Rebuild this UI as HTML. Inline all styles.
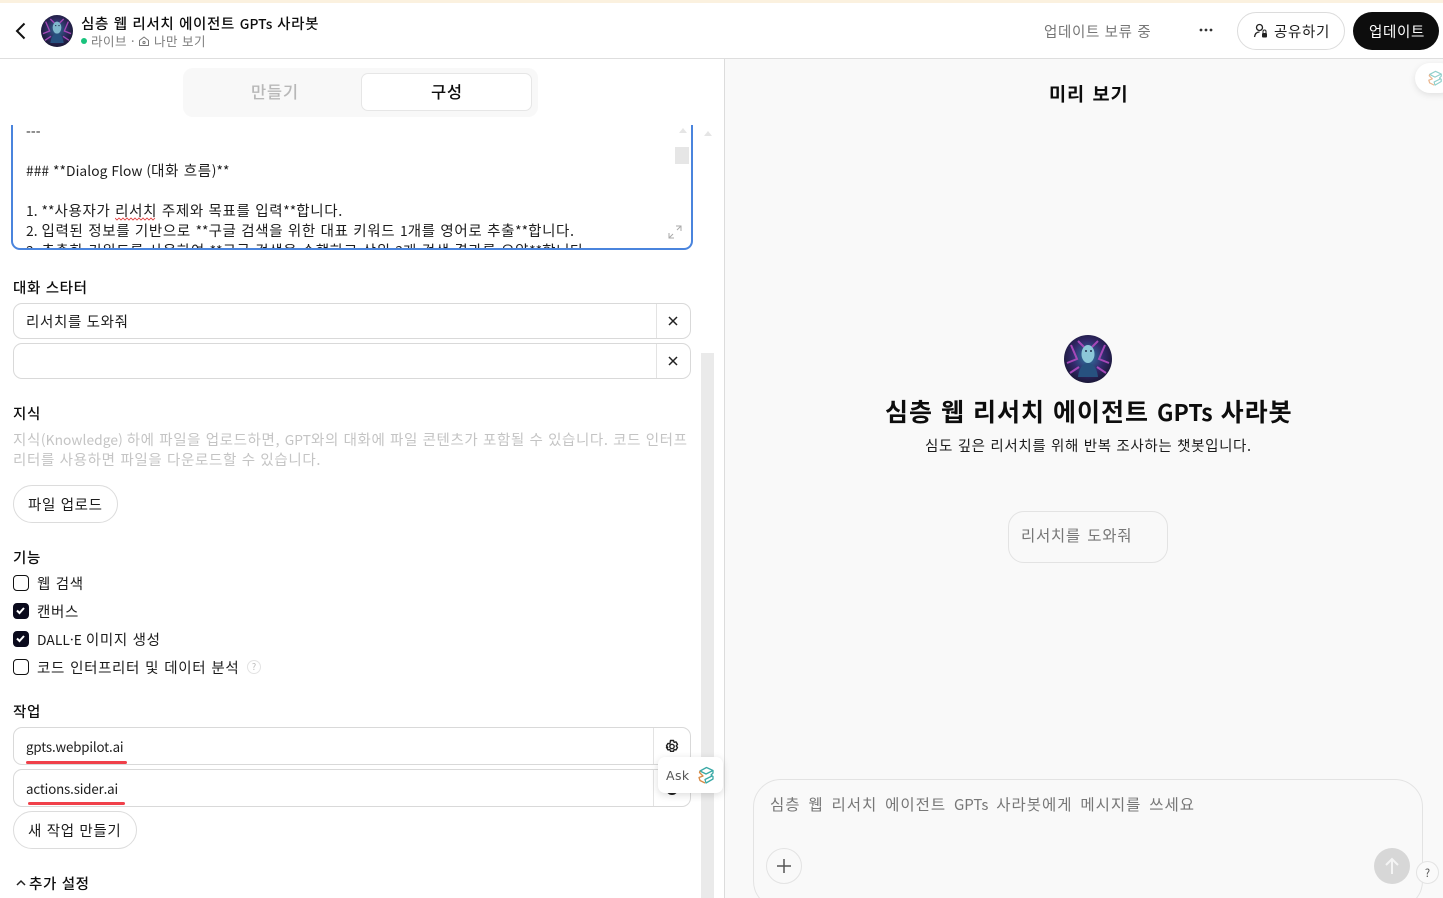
<!DOCTYPE html>
<html lang="ko"><head><meta charset="utf-8"><title>GPT</title>
<style>
html,body{margin:0;padding:0;width:1443px;height:898px;overflow:hidden;background:#fff}
body{position:relative;font-family:"Noto Sans CJK KR","Liberation Sans",sans-serif;color:#0d0d0d}
.a{position:absolute;margin-top:1px;white-space:nowrap;line-height:20px;font-size:14.5px;letter-spacing:.65px;word-spacing:0;color:#1c1c1c}
.l{font-size:13.8px;letter-spacing:.05px;word-spacing:0}
.u{font-size:13.3px;letter-spacing:-.15px}
.box{position:absolute;box-sizing:border-box;border:1px solid #d9d9d9;border-radius:9px;background:#fff}
.b{font-weight:500;color:#0d0d0d}
.cb{position:absolute;left:13px;width:16px;height:16px;box-sizing:border-box;border:1.5px solid #111;border-radius:4px;background:#fff}
.cb.on{background:#0a0a1c;border-color:#0a0a1c}
.cb svg{position:absolute;left:1px;top:1px}
.vl{position:absolute;width:1px;background:#e3e3e3}
</style></head><body>
<div style="position:absolute;left:0;top:0;width:1443px;height:3px;background:#fbf1df"></div>
<div style="position:absolute;left:725px;top:59px;width:718px;height:839px;background:#f9f9f9"></div>
<div style="position:absolute;left:0;top:58px;width:1443px;height:1px;background:#dedede"></div>
<div style="position:absolute;left:724px;top:59px;width:1px;height:839px;background:#dcdcdc"></div>

<svg style="position:absolute;left:14px;top:22px" width="14" height="18" viewBox="0 0 14 18"><path d="M10.500 1.500 3 9l7.500 7.500" fill="none" stroke="#111" stroke-width="2"/></svg>
<svg style="position:absolute;left:41px;top:15px" width="32" height="32" viewBox="0 0 48 48"><defs><radialGradient id="g1" cx=".5" cy=".45" r=".6"><stop offset="0" stop-color="#2f6f96"/><stop offset=".55" stop-color="#2e2a5e"/><stop offset="1" stop-color="#15142c"/></radialGradient></defs><circle cx="24" cy="24" r="24" fill="url(#g1)"/><path d="M3 28 13 24 7 10M45 28 35 24 41 10M6 38 15 32M42 38 33 32M14 6 20 12M34 6 28 12" stroke="#a548b8" stroke-width="2" fill="none"/><ellipse cx="24" cy="19" rx="6.500" ry="9" fill="#7fb8cc"/><path d="M21 16h2M26 16h2" stroke="#22304f" stroke-width="1.500"/><path d="M14 42c1-9 5-14 10-14s9 5 10 14z" fill="#27517f"/></svg>
<div class="a b" style="left:81px;top:12px">심층 웹 리서치 에이전트 <span class="l">GPTs</span> 사라봇</div>
<div style="position:absolute;left:81px;top:38px;width:6px;height:6px;border-radius:50%;background:#19c37d"></div>
<div class="a" style="left:91px;top:30px;font-size:12.500px;letter-spacing:.5px;color:#7d7d7d">라이브 ·</div>
<svg style="position:absolute;left:138px;top:35px" width="12" height="12" viewBox="0 0 12 12"><path d="M1.500 5.500 6 2l4.500 3.500V10.500H1.500z" fill="none" stroke="#777" stroke-width="1" stroke-linejoin="round"/><circle cx="6" cy="7.500" r="1.100" fill="none" stroke="#777"/></svg>
<div class="a" style="left:154px;top:30px;font-size:12.500px;letter-spacing:.5px;color:#7d7d7d">나만 보기</div>

<div class="a" style="left:1044px;top:21px;color:#777">업데이트 보류 중</div>
<svg style="position:absolute;left:1199px;top:27px" width="14" height="6" viewBox="0 0 14 6"><circle cx="2" cy="3" r="1.400" fill="#333"/><circle cx="7" cy="3" r="1.400" fill="#333"/><circle cx="12" cy="3" r="1.400" fill="#333"/></svg>
<div style="position:absolute;left:1237px;top:12px;width:108px;height:38px;box-sizing:border-box;border:1px solid #dcdcdc;border-radius:19px;background:#fff"></div>
<svg style="position:absolute;left:1253px;top:23px" width="16" height="16" viewBox="0 0 16 16"><circle cx="6.500" cy="4.500" r="3" fill="none" stroke="#222" stroke-width="1.300"/><path d="M1.500 14c.5-3.500 2.500-5 5-5" fill="none" stroke="#222" stroke-width="1.300"/><rect x="9" y="10" width="5" height="4.500" rx="1" fill="#222"/><path d="M10 10V8.500a1.500 1.500 0 0 1 3 0V10" fill="none" stroke="#222"/></svg>
<div class="a" style="left:1274px;top:21px">공유하기</div>
<div style="position:absolute;left:1353px;top:12px;width:86px;height:38px;border-radius:19px;background:#0d0d0d"></div>
<div class="a" style="left:1369px;top:21px;color:#fff">업데이트</div>

<div style="position:absolute;left:183px;top:68px;width:355px;height:49px;border-radius:10px;background:#f8f8f8"></div>
<div class="a" style="left:251px;top:80px;font-size:16.500px;letter-spacing:.75px;color:#b8b8b8;font-weight:500">만들기</div>
<div style="position:absolute;left:361px;top:73px;width:171px;height:38px;box-sizing:border-box;border:1px solid #e6e6e6;border-radius:7px;background:#fff"></div>
<div class="a" style="left:431px;top:80px;font-size:16.500px;letter-spacing:.75px;font-weight:500;color:#0d0d0d">구성</div>

<div style="position:absolute;left:11px;top:125px;width:682px;height:125px;box-sizing:border-box;border:2px solid #4a84dd;border-top:0;border-radius:0 0 9px 9px;overflow:hidden;background:#fff">
<div class="a" style="left:13px;top:-5px"><span class="l">---</span></div>
<div class="a" style="left:13px;top:34px"><span class="l">### **Dialog Flow (</span>대화 흐름<span class="l">)**</span></div>
<div class="a" style="left:13px;top:74px"><span class="l">1. **</span>사용자가 리서치 주제와 목표를 입력<span class="l">**</span>합니다.</div>
<div class="a" style="left:13px;top:94px"><span class="l">2. </span>입력된 정보를 기반으로 <span class="l">**</span>구글 검색을 위한 대표 키워드 <span class="l">1</span>개를 영어로 추출<span class="l">**</span>합니다.</div>
<div class="a" style="left:13px;top:114px"><span class="l">3. </span>추출한 키워드를 사용하여 <span class="l">**</span>구글 검색을 수행하고 상위 <span class="l">3</span>개 검색 결과를 요약<span class="l">**</span>합니다.</div>
<svg style="position:absolute;left:102px;top:92px" width="44" height="4" viewBox="0 0 44 4"><path d="M0 1l2 2 2-2 2 2 2-2 2 2 2-2 2 2 2-2 2 2 2-2 2 2 2-2 2 2 2-2 2 2 2-2 2 2 2-2 2 2 2-2" fill="none" stroke="#d33" stroke-width=".8"/></svg>
<div style="position:absolute;left:662px;top:22px;width:14px;height:17px;background:#e6e6e6"></div>
<svg style="position:absolute;left:666px;top:3px" width="8" height="5"><path d="M4 0 8 5H0z" fill="#e5e5e5"/></svg>
<svg style="position:absolute;left:655px;top:100px" width="14" height="14" viewBox="0 0 14 14"><path d="M8 1h5v5M13 1 9 5M1 8v5h5M1 13l4-4" fill="none" stroke="#aaa" stroke-width="1"/></svg>
</div>
<svg style="position:absolute;left:704px;top:131px" width="8" height="5"><path d="M4 0 8 5H0z" fill="#e5e5e5"/></svg>
<div style="position:absolute;left:701px;top:353px;width:13px;height:545px;background:#eaeaea"></div>

<div class="a b" style="left:13px;top:277px">대화 스타터</div>
<div class="box" style="left:13px;top:303px;width:678px;height:36px"></div><div class="vl" style="left:656px;top:304px;height:34px"></div>
<div class="a" style="left:26px;top:311px">리서치를 도와줘</div>
<svg style="position:absolute;left:668px;top:316px" width="10" height="10" viewBox="0 0 10 10"><path d="M1 1l8 8M9 1 1 9" stroke="#222" stroke-width="1.500"/></svg>
<div class="box" style="left:13px;top:343px;width:678px;height:36px"></div><div class="vl" style="left:656px;top:344px;height:34px"></div>
<svg style="position:absolute;left:668px;top:356px" width="10" height="10" viewBox="0 0 10 10"><path d="M1 1l8 8M9 1 1 9" stroke="#222" stroke-width="1.500"/></svg>

<div class="a b" style="left:13px;top:403px">지식</div>
<div class="a" style="left:13px;top:428px;color:#c4c4c4;letter-spacing:.6px">지식<span class="l">(Knowledge) </span>하에 파일을 업로드하면, <span class="l">GPT</span>와의 대화에 파일 콘텐츠가 포함될 수 있습니다. 코드 인터프</div>
<div class="a" style="left:13px;top:449px;color:#c4c4c4">리터를 사용하면 파일을 다운로드할 수 있습니다.</div>
<div style="position:absolute;left:13px;top:485px;width:105px;height:38px;box-sizing:border-box;border:1px solid #dcdcdc;border-radius:19px;background:#fff"></div>
<div class="a" style="left:28px;top:494px">파일 업로드</div>

<div class="a b" style="left:13px;top:547px">기능</div>
<div class="cb" style="top:575px"></div><div class="a" style="left:37px;top:573px">웹 검색</div>
<div class="cb on" style="top:603px"><svg width="11" height="11" viewBox="0 0 11 11"><path d="M2 5.500 4.500 8 9 3" fill="none" stroke="#fff" stroke-width="2"/></svg></div><div class="a" style="left:37px;top:601px">캔버스</div>
<div class="cb on" style="top:631px"><svg width="11" height="11" viewBox="0 0 11 11"><path d="M2 5.500 4.500 8 9 3" fill="none" stroke="#fff" stroke-width="2"/></svg></div><div class="a" style="left:37px;top:628px"><span class="l">DALL·E </span>이미지 생성</div>
<div class="cb" style="top:659px"></div><div class="a" style="left:37px;top:657px;word-spacing:.4px">코드 인터프리터 및 데이터 분석</div>
<div style="position:absolute;left:247px;top:660px;width:14px;height:14px;box-sizing:border-box;border:1px solid #e3e3e3;border-radius:50%;font-size:9px;line-height:12px;text-align:center;color:#bbb">?</div>

<div class="a b" style="left:13px;top:701px">작업</div>
<div class="box" style="left:13px;top:727px;width:678px;height:38px"></div><div class="vl" style="left:653px;top:728px;height:36px"></div>
<div class="a u" style="left:26px;top:736px">gpts.webpilot.ai</div>
<svg style="position:absolute;left:664px;top:738.500px" width="16" height="16" viewBox="0 0 16 16"><path d="M6.500 1.500h3l.6 1.800 1.900-.4 1.500 2.500-1.300 1.500 1.300 1.500-1.500 2.500-1.900-.4-.6 1.800h-3l-.6-1.800-1.900.4-1.500-2.500L3.800 8.400 2.500 6.900 4 4.400l1.900.4z" fill="none" stroke="#222" stroke-width="1.400" stroke-linejoin="round"/><circle cx="8" cy="7.500" r="2.200" fill="none" stroke="#222" stroke-width="1.400"/></svg>
<div class="box" style="left:13px;top:769px;width:678px;height:38px"></div><div class="vl" style="left:653px;top:770px;height:36px"></div>
<div class="a u" style="left:26px;top:778px">actions.sider.ai</div>
<svg style="position:absolute;left:664px;top:780px" width="16" height="18" viewBox="0 0 16 16"><circle cx="8" cy="8" r="5" fill="none" stroke="#222" stroke-width="2"/></svg>
<div style="position:absolute;left:26px;top:761px;width:101px;height:3px;background:#f0404a;border-radius:2px"></div>
<div style="position:absolute;left:28px;top:802px;width:97px;height:3px;background:#f0404a;border-radius:2px"></div>
<div style="position:absolute;left:13px;top:811px;width:124px;height:38px;box-sizing:border-box;border:1px solid #dcdcdc;border-radius:19px;background:#fff"></div>
<div class="a" style="left:28px;top:820px">새 작업 만들기</div>
<svg style="position:absolute;left:16px;top:879px" width="10" height="7" viewBox="0 0 10 7"><path d="M1 6 5 2l4 4" fill="none" stroke="#222" stroke-width="1.500"/></svg>
<div class="a b" style="left:29px;top:873px">추가 설정</div>

<div style="position:absolute;left:658px;top:757px;width:65px;height:36px;background:#fff;border-radius:7px;box-shadow:0 2px 8px rgba(0,0,0,.14)"></div>
<div class="a" style="left:666px;top:765px;letter-spacing:.4px;color:#555;font-family:'DejaVu Sans',sans-serif;font-size:12.500px">Ask</div>
<svg style="position:absolute;left:697px;top:766px" width="18" height="18" viewBox="0 0 18 18"><path d="M3 5 9.500 1.500 16 4.500 9 8z" fill="none" stroke="#3aa9a6" stroke-width="1.300" stroke-linejoin="round"/><path d="M3 5 2.500 6.500 6 10 2 11.500l1 3L8 17" fill="none" stroke="#d98a45" stroke-width="1.300" stroke-linejoin="round"/><path d="M16 4.500V7l-2 2 2 1.500V13l-7 4-1-3.500L15 10" fill="none" stroke="#3aa9a6" stroke-width="1.300" stroke-linejoin="round"/></svg>

<div class="a" style="left:1049px;top:83px;font-size:18.600px;letter-spacing:.84px;word-spacing:1.600px;font-weight:700;color:#0d0d0d">미리 보기</div>
<div style="position:absolute;left:1415px;top:63px;width:40px;height:30px;border-radius:15px;background:#fff;box-shadow:0 2px 7px rgba(0,0,0,.1)"></div>
<svg style="position:absolute;left:1427px;top:69px" width="16" height="18" viewBox="0 0 18 18"><path d="M3 5 9.500 1.500 16 4.500 9 8z" fill="none" stroke="#8fcfcb" stroke-width="1.300" stroke-linejoin="round"/><path d="M3 5 2.500 6.500 6 10 2 11.500l1 3L8 17" fill="none" stroke="#e9b48c" stroke-width="1.300" stroke-linejoin="round"/><path d="M16 4.500V7l-2 2 2 1.500V13l-7 4-1-3.500L15 10" fill="none" stroke="#8fcfcb" stroke-width="1.300" stroke-linejoin="round"/></svg>

<svg style="position:absolute;left:1064px;top:335px" width="48" height="48" viewBox="0 0 48 48"><defs><radialGradient id="g2" cx=".5" cy=".45" r=".6"><stop offset="0" stop-color="#2f7fa6"/><stop offset=".55" stop-color="#33296c"/><stop offset="1" stop-color="#15142c"/></radialGradient></defs><circle cx="24" cy="24" r="24" fill="url(#g2)"/><path d="M3 28 13 24 7 10M45 28 35 24 41 10M6 38 15 32M42 38 33 32M14 6 20 12M34 6 28 12" stroke="#a548b8" stroke-width="2" fill="none"/><ellipse cx="24" cy="19" rx="6.500" ry="9" fill="#8cc7d8"/><path d="M21 16h2M26 16h2" stroke="#22304f" stroke-width="1.500"/><path d="M14 42c1-9 5-14 10-14s9 5 10 14z" fill="#27517f"/></svg>
<div class="a" style="left:885px;top:395px;line-height:30px;font-size:25px;letter-spacing:1px;word-spacing:0;font-weight:700;color:#0d0d0d">심층 웹 리서치 에이전트 <span style="font-size:23px;letter-spacing:0;word-spacing:0">GPTs</span> 사라봇</div>
<div class="a" style="left:925px;top:435px">심도 깊은 리서치를 위해 반복 조사하는 챗봇입니다.</div>
<div style="position:absolute;left:1008px;top:511px;width:160px;height:52px;box-sizing:border-box;border:1px solid #e3e3e3;border-radius:16px;background:#f9f9f9"></div>
<div class="a" style="left:1021px;top:524px;font-size:15.500px;letter-spacing:.7px;word-spacing:1.400px;color:#777">리서치를 도와줘</div>

<div style="position:absolute;left:753px;top:779px;width:670px;height:130px;box-sizing:border-box;border:1px solid #e3e3e3;border-radius:28px;background:#f9f9f9"></div>
<div class="a" style="left:770px;top:793px;font-size:15.500px;letter-spacing:1px;word-spacing:2.500px;color:#777">심층 웹 리서치 에이전트 <span style="font-size:15px;letter-spacing:0">GPTs</span> 사라봇에게 메시지를 쓰세요</div>
<div style="position:absolute;left:766px;top:848px;width:36px;height:36px;box-sizing:border-box;border:1px solid #e3e3e3;border-radius:50%"></div>
<svg style="position:absolute;left:777px;top:859px" width="14" height="14" viewBox="0 0 14 14"><path d="M7 0v14M0 7h14" stroke="#555" stroke-width="1.500"/></svg>
<div style="position:absolute;left:1374px;top:848px;width:36px;height:36px;border-radius:50%;background:#d7d7d7"></div>
<svg style="position:absolute;left:1384px;top:857px" width="16" height="18" viewBox="0 0 16 18"><path d="M8 17V2M2 8l6-6 6 6" fill="none" stroke="#f4f4f4" stroke-width="2"/></svg>
<div style="position:absolute;left:1416px;top:861px;width:23px;height:23px;box-sizing:border-box;border:1px solid #e3e3e3;border-radius:50%;background:#fafafa;font-size:11px;line-height:22px;text-align:center;color:#555">?</div>
</body></html>
